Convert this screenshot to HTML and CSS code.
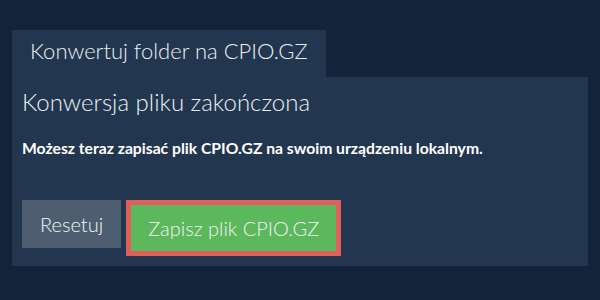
FILE: index.html
```html
<!DOCTYPE html>
<html lang="pl">
<head>
<meta charset="utf-8">
<title>Konwertuj folder na CPIO.GZ</title>
<link rel="stylesheet" href="styles.css">
</head>
<body>
<div class="wrap">
  <div class="tab">Konwertuj folder na CPIO.GZ</div>
  <div class="panel">
    <h2 class="title">Konwersja pliku zakończona</h2>
    <p class="msg">Możesz teraz zapisać plik CPIO.GZ na swoim urządzeniu lokalnym.</p>
    <div class="actions">
      <button class="btn btn-reset">Resetuj</button>
      <button class="btn btn-save">Zapisz plik CPIO.GZ</button>
    </div>
  </div>
</div>
</body>
</html>
```
FILE: styles.css
```css
html, body {
  margin: 0;
  padding: 0;
  background: #12233a;
  font-family: Lato, "Open Sans", sans-serif;
  color: #eceff2;
}
.wrap {
  padding: 30px 12px 0 12px;
}
.tab {
  display: inline-block;
  background: #22374f;
  font-size: 22px;
  font-weight: 300;
  line-height: 26px;
  padding: 8px 18px 13px 18px;
}
.panel {
  background: #22374f;
  padding: 10px 10px 10px 10px;
}
.title {
  margin: 0;
  font-weight: 300;
  font-size: 24px;
  line-height: 29px;
}
.msg {
  margin: 23px 0 0 0;
  font-weight: 700;
  font-size: 15.7px;
  line-height: 18px;
  color: #ffffff;
}
.actions {
  display: flex;
  align-items: flex-start;
  gap: 5px;
  margin-top: 43px;
}
.btn {
  font-family: Lato, "Open Sans", sans-serif;
  font-weight: 300;
  font-size: 20px;
  line-height: 24px;
  color: #f2f4f5;
  border: 0;
  margin: 0;
  cursor: pointer;
}
.btn-reset {
  background: #4e5e70;
  padding: 12px 18px 12px 18px;
}
.btn-save {
  background: #5cb85c;
  border: 5px solid #df5f5a;
  padding: 11px 17px 11px 17px;
}
```
